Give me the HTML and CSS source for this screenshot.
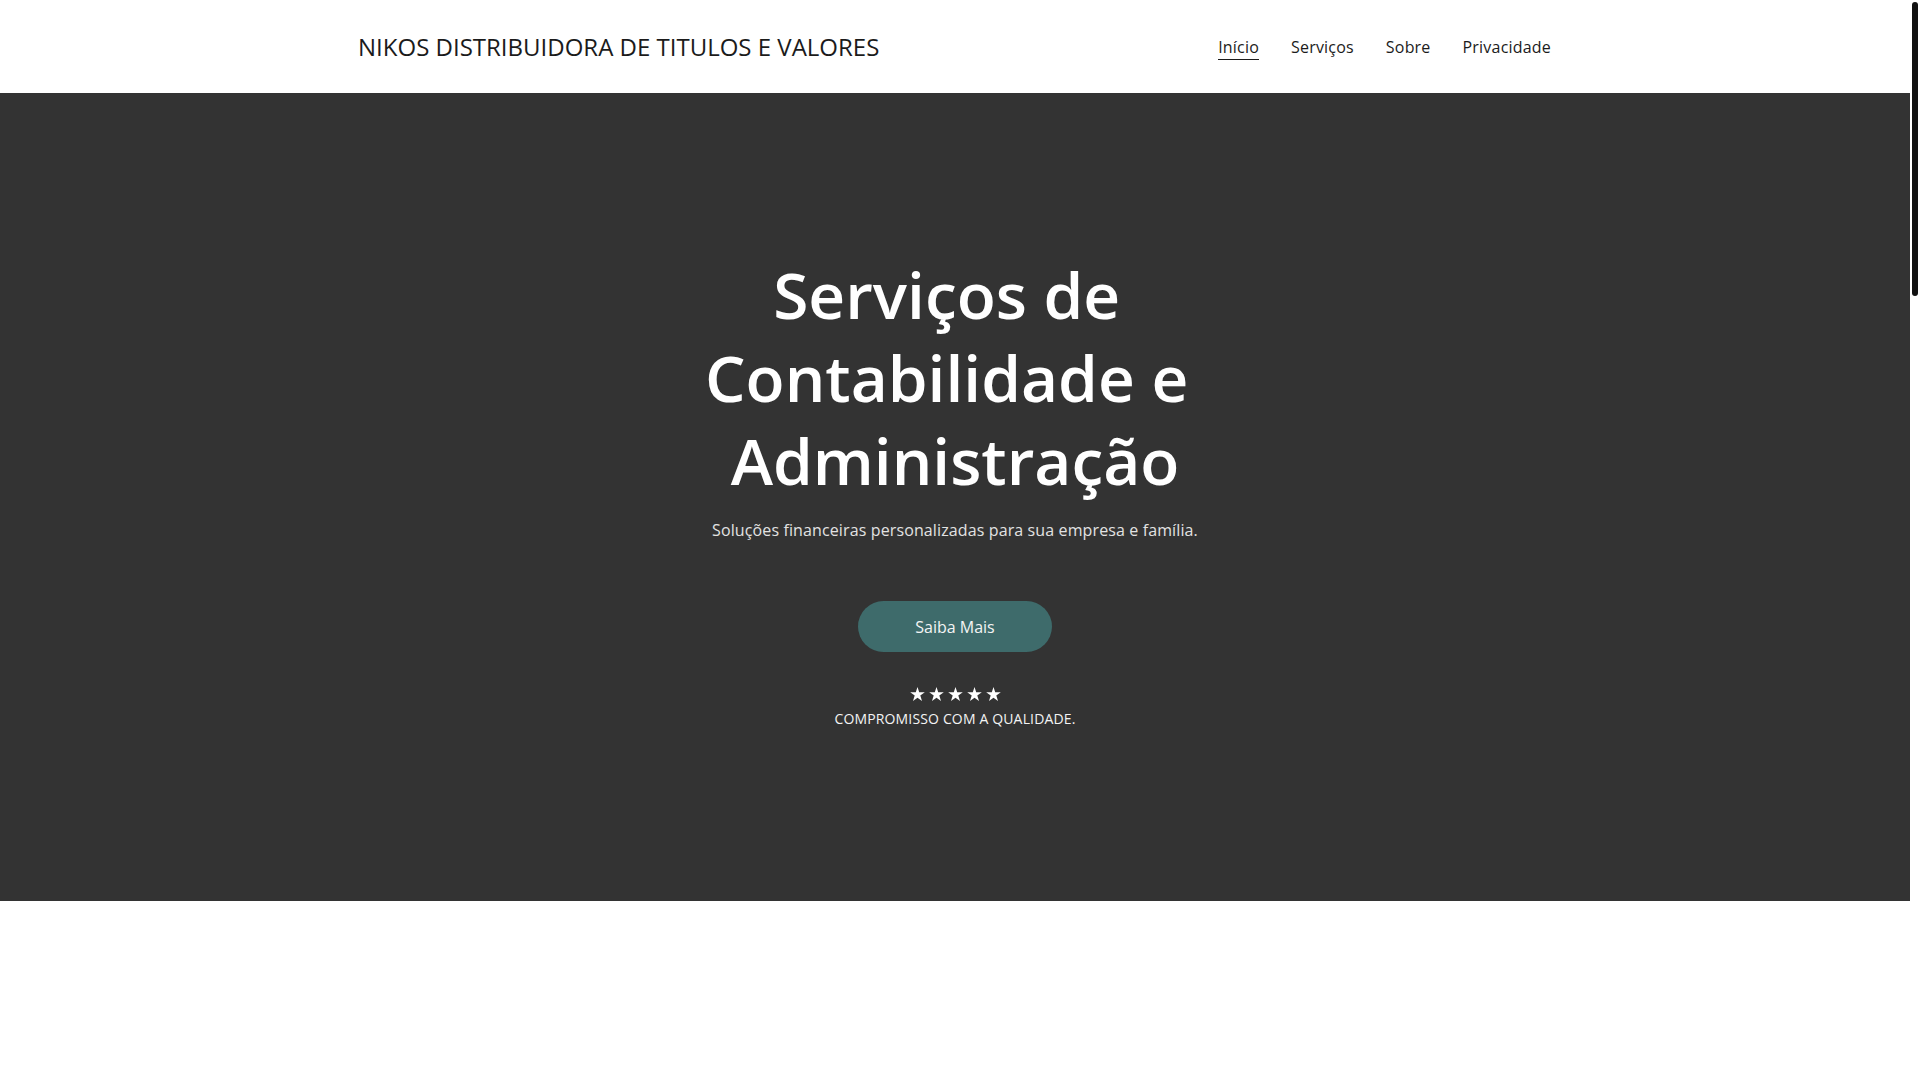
FILE: index.html
```html
<!DOCTYPE html>
<html lang="pt-BR">
<head>
<meta charset="utf-8">
<title>NIKOS DISTRIBUIDORA DE TITULOS E VALORES</title>
<link rel="stylesheet" href="styles.css">
</head>
<body>
<div class="page">
  <header class="site-header">
    <div class="container header-row">
      <a class="brand" href="#">NIKOS DISTRIBUIDORA DE TITULOS E VALORES</a>
      <nav class="nav">
        <a class="nav-link active" href="#"><span>Início</span></a>
        <a class="nav-link" href="#"><span>Serviços</span></a>
        <a class="nav-link" href="#"><span>Sobre</span></a>
        <a class="nav-link" href="#"><span>Privacidade</span></a>
      </nav>
    </div>
  </header>
  <section class="hero">
    <div class="hero-inner">
      <h1 class="hero-title">Serviços de&nbsp;<br>Contabilidade e&nbsp;<br>Administração</h1>
      <p class="hero-sub">Soluções financeiras personalizadas para sua empresa e família.</p>
      <a class="btn" href="#">Saiba Mais</a>
      <div class="rating">
        <div class="stars">
          <svg class="star" viewBox="0 0 24 23"><polygon points="12,0 14.8,8.6 24,8.6 16.6,14 19.4,23 12,17.5 4.6,23 7.4,14 0,8.6 9.2,8.6"/></svg>
          <svg class="star" viewBox="0 0 24 23"><polygon points="12,0 14.8,8.6 24,8.6 16.6,14 19.4,23 12,17.5 4.6,23 7.4,14 0,8.6 9.2,8.6"/></svg>
          <svg class="star" viewBox="0 0 24 23"><polygon points="12,0 14.8,8.6 24,8.6 16.6,14 19.4,23 12,17.5 4.6,23 7.4,14 0,8.6 9.2,8.6"/></svg>
          <svg class="star" viewBox="0 0 24 23"><polygon points="12,0 14.8,8.6 24,8.6 16.6,14 19.4,23 12,17.5 4.6,23 7.4,14 0,8.6 9.2,8.6"/></svg>
          <svg class="star" viewBox="0 0 24 23"><polygon points="12,0 14.8,8.6 24,8.6 16.6,14 19.4,23 12,17.5 4.6,23 7.4,14 0,8.6 9.2,8.6"/></svg>
        </div>
        <p class="rating-text">COMPROMISSO COM A QUALIDADE.</p>
      </div>
    </div>
  </section>
  <section class="below"></section>
</div>
<div class="scrollbar" aria-hidden="true"><div class="scrollbar-thumb"></div></div>
</body>
</html>
```
FILE: styles.css
```css
* {
  box-sizing: border-box;
}

html::-webkit-scrollbar {
  display: none;
}

body {
  margin: 0;
  padding-right: 10px;
  font-family: "Open Sans", "Noto Sans", sans-serif;
  color: #1b1b1b;
  background: #ffffff;
}

a {
  text-decoration: none;
  color: inherit;
}

.container {
  max-width: 1200px;
  margin: 0 auto;
}

.site-header {
  background: #ffffff;
}

.header-row {
  height: 93px;
  display: flex;
  align-items: center;
  justify-content: space-between;
  padding: 0 4px 0 3px;
}

.brand {
  font-size: 24px;
  line-height: 32px;
  font-weight: 400;
  color: #1b1b1b;
}

.nav {
  display: flex;
  gap: 32px;
  align-items: center;
}

.nav-link {
  font-size: 16px;
  line-height: 24px;
  color: #1b1b1b;
  padding-top: 1px;
  letter-spacing: 0.2px;
}

.nav-link span {
  display: inline-block;
  border-bottom: 1px solid transparent;
}

.nav-link.active span {
  border-bottom-color: #1b1b1b;
}

.hero {
  background: #333333;
  height: 808px;
  display: flex;
  justify-content: center;
}

.hero-inner {
  display: flex;
  flex-direction: column;
  align-items: center;
  text-align: center;
  padding-top: 160px;
}

.hero-title {
  margin: 0;
  font-size: 64px;
  line-height: 83px;
  font-weight: 600;
  color: #ffffff;
}

.hero-sub {
  margin: 16px 0 0;
  font-size: 16px;
  line-height: 24px;
  letter-spacing: 0.12px;
  color: #e2e2e2;
}

.btn {
  margin-top: 59px;
  display: inline-flex;
  align-items: center;
  justify-content: center;
  width: 194px;
  height: 51px;
  border-radius: 26px;
  background: #3e6b6b;
  color: #f4f4f4;
  font-size: 16px;
  font-weight: 500;
}

.rating {
  margin-top: 35px;
  display: flex;
  flex-direction: column;
  align-items: center;
}

.stars {
  display: flex;
  gap: 4px;
  height: 14px;
}

.star {
  width: 15px;
  height: 14px;
  fill: #ffffff;
}

.rating-text {
  margin: 9px 0 0;
  font-size: 14px;
  line-height: 18px;
  letter-spacing: 0.15px;
  color: #f4f4f4;
}

.below {
  height: 3010px;
  background: #ffffff;
}

.scrollbar {
  position: fixed;
  top: 0;
  right: 0;
  width: 10px;
  height: 100vh;
  background: #ffffff;
  padding: 2px;
}

.scrollbar-thumb {
  width: 6px;
  height: 294px;
  border-radius: 3px;
  background: #111111;
}
```
